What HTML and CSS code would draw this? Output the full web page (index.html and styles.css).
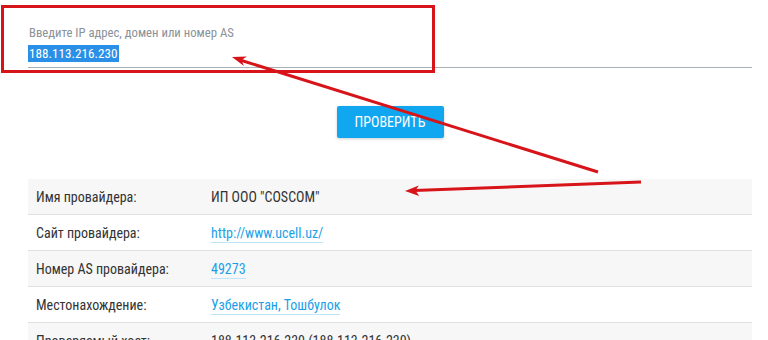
FILE: index.html
```html
<!DOCTYPE html>
<html lang="ru">
<head>
    <meta charset="UTF-8">
    <meta name="viewport" content="width=device-width, initial-scale=1.0">
    <title>Проверка IP</title>
    <link rel="stylesheet" href="styles.css">
</head>
<body>
    <div class="page">
        <div class="field">
            <label class="field_label" for="host">Введите IP адрес, домен или номер AS</label>
            <div class="field_input" id="host"><span class="selected">188.113.216.230</span></div>
        </div>
        <div class="actions">
            <button class="check_button">Проверить</button>
        </div>
        <table class="info">
            <tr>
                <td class="info_name">Имя провайдера:</td>
                <td>ИП ООО "COSCOM"</td>
            </tr>
            <tr>
                <td class="info_name">Сайт провайдера:</td>
                <td><a class="info_link" href="#">http://www.ucell.uz/</a></td>
            </tr>
            <tr>
                <td class="info_name">Номер AS провайдера:</td>
                <td><a class="info_link" href="#">49273</a></td>
            </tr>
            <tr>
                <td class="info_name">Местонахождение:</td>
                <td><a class="info_link" href="#">Узбекистан, Тошбулок</a></td>
            </tr>
            <tr>
                <td class="info_name">Проверяемый хост:</td>
                <td>188.113.216.230 (188.113.216.230)</td>
            </tr>
        </table>
    </div>

    <!-- пометки поверх скриншота -->
    <div class="mark_box"></div>
    <svg class="arrows" width="768" height="340" viewBox="0 0 768 340">
        <line x1="598" y1="172" x2="240" y2="60" />
        <polygon points="232,57 246.9,56.4 241.5,60 243.9,66" />
        <line x1="641" y1="182" x2="414" y2="190.6" />
        <polygon points="405,191 419.2,196 415.5,190.6 418.8,185.5" />
    </svg>
</body>
</html>
```

FILE: styles.css
```css
body
{
    margin: 0;
    font-family: "Roboto Condensed", Roboto, "Noto Sans", sans-serif;
    font-stretch: condensed;
    color: #333;
    background-color: #fff;
}
.page
{
    width: 724px;
    padding-left: 28px;
}
.field
{
    padding-top: 26px;
}
.field_label
{
    display: block;
    padding-left: 1px;
    font-size: 12.7px;
    line-height: 14px;
    color: #8a9199;
}
.field_input
{
    margin-top: 6px;
    padding-bottom: 5px;
    line-height: 16px;
    font-size: 13.2px;
    border-bottom: 1px solid #a9b0b6;
}
.selected
{
    background-color: #2a8fe6;
    color: #fff;
    padding: 1px 1px;
}
.actions
{
    display: flex;
    justify-content: center;
    padding-top: 38px;
}
.check_button
{
    width: 107px;
    height: 32px;
    border: 0;
    border-radius: 2px;
    background-color: #10a6f0;
    color: #fff;
    font-family: inherit;
    font-size: 14px;
    text-transform: uppercase;
    box-shadow: 0 1px 3px rgba(0, 0, 0, 0.2);
}
.info
{
    width: 724px;
    margin-top: 41px;
    border-collapse: collapse;
    font-size: 14px;
}
.info tr:nth-child(odd)
{
    background-color: #f7f7f7;
}
.info tr + tr td
{
    border-top: 1px solid #e1e1e1;
}
.info td
{
    height: 35px;
    padding: 0;
    vertical-align: middle;
}
.info .info_name
{
    width: 175px;
    padding-left: 8px;
}
.info_link
{
    color: #1b9fe8;
    text-decoration: none;
    border-bottom: 1px solid #bfe5fb;
    padding-bottom: 1px;
}
.mark_box
{
    position: absolute;
    left: 1px;
    top: 5px;
    width: 428px;
    height: 62px;
    border: 3px solid #d7141a;
}
.arrows
{
    position: absolute;
    left: 0;
    top: 0;
}
.arrows line
{
    stroke: #d7141a;
    stroke-width: 3;
}
.arrows polygon
{
    fill: #d7141a;
}
```
